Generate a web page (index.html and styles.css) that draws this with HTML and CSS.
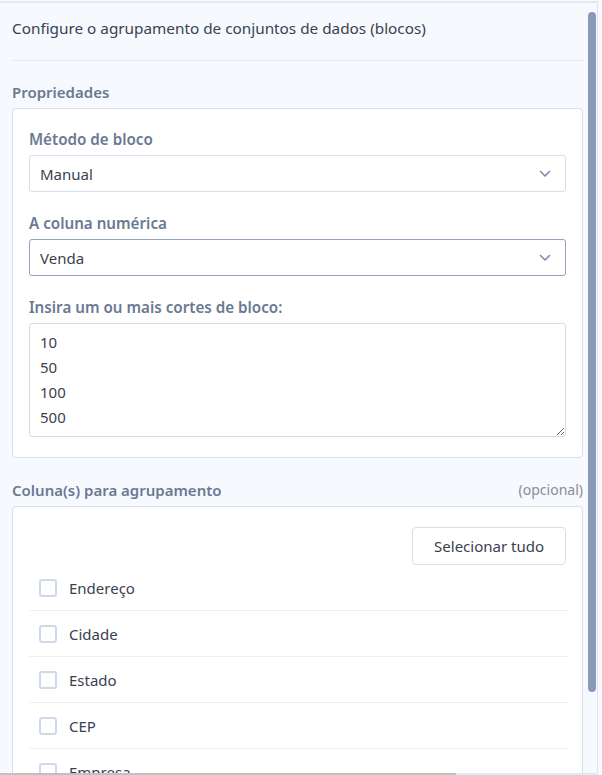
FILE: index.html
```html
<!DOCTYPE html>
<html lang="pt">
<head>
  <meta charset="UTF-8">
  <meta name="viewport" content="width=device-width, initial-scale=1.0">
  <title>Agrupamento em blocos</title>
  <link rel="stylesheet" href="styles.css">
</head>
<body>
  <div class="frame">
    <div class="pane">
      <div class="scroll">
        <div class="intro">Configure o agrupamento de conjuntos de dados (blocos)</div>

        <div class="section-title">Propriedades</div>
        <div class="card">
          <label class="field-label">Método de bloco</label>
          <div class="select">
            <span>Manual</span>
            <svg width="12" height="8" viewBox="0 0 12 8"><path d="M1.5 1.5 L6 6 L10.5 1.5" fill="none" stroke="#7d8cab" stroke-width="1.6" stroke-linecap="round" stroke-linejoin="round"/></svg>
          </div>

          <label class="field-label">A coluna numérica</label>
          <div class="select active">
            <span>Venda</span>
            <svg width="12" height="8" viewBox="0 0 12 8"><path d="M1.5 1.5 L6 6 L10.5 1.5" fill="none" stroke="#7d8cab" stroke-width="1.6" stroke-linecap="round" stroke-linejoin="round"/></svg>
          </div>

          <label class="field-label" for="cuts">Insira um ou mais cortes de bloco:</label>
          <textarea id="cuts" class="cuts">10
50
100
500</textarea>
        </div>

        <div class="section-head">
          <span class="section-title">Coluna(s) para agrupamento</span>
          <span class="optional">(opcional)</span>
        </div>
        <div class="card list-card">
          <div class="actions">
            <button type="button">Selecionar tudo</button>
          </div>
          <ul class="checklist">
            <li><span class="box"></span>Endereço</li>
            <li><span class="box"></span>Cidade</li>
            <li><span class="box"></span>Estado</li>
            <li><span class="box"></span>CEP</li>
            <li><span class="box"></span>Empresa</li>
            <li><span class="box"></span>Telefone</li>
          </ul>
        </div>
      </div>
      <div class="scrollbar"><div class="thumb"></div></div>
    </div>
    <div class="bottom-bar">
      <div class="bar-gray"></div>
      <div class="bar-cyan"></div>
    </div>
  </div>
</body>
</html>
```

FILE: styles.css
```css
body {
  margin: 0;
  font-family: "Noto Sans", "Open Sans", sans-serif;
  font-size: 15px;
  color: #3b4150;
  background: #f6f9fe;
}
.frame {
  height: 775px;
  display: flex;
  flex-direction: column;
  overflow: hidden;
}
.pane {
  width: 598px;
  height: 772px;
  margin-top: 1px;
  display: flex;
  border-top: 2px solid #e3e8f1;
  box-sizing: border-box;
}
.scroll {
  flex: 1;
  overflow: hidden;
  padding: 15px 3px 0 12px;
}
.scrollbar {
  width: 11px;
  border-right: 1px solid #dfe5ef;
}
.thumb {
  width: 8px;
  height: 680px;
  margin: 9px 1px 0 2px;
  background: #8a9bba;
  border-radius: 4px;
}
.intro {
  font-size: 15.3px;
  line-height: 20px;
  padding-bottom: 22px;
  border-bottom: 1px solid #e6ebf3;
}
.section-title {
  font-weight: 600;
  font-size: 15px;
  color: #6b7992;
  line-height: 20px;
}
.intro + .section-title {
  display: block;
  margin: 21px 0 6px;
}
.section-head {
  display: flex;
  justify-content: space-between;
  align-items: center;
  margin: 22px 0 6px;
  line-height: 20px;
}
.optional {
  font-size: 14px;
  color: #8a8d94;
}
.card {
  background: #fff;
  border: 1px solid #d6deee;
  border-radius: 4px;
  padding: 20px 16px;
}
.field-label {
  display: block;
  font-weight: 600;
  font-size: 15.2px;
  color: #6b7992;
  line-height: 20px;
  margin-bottom: 6px;
}
.select {
  height: 37px;
  box-sizing: border-box;
  display: flex;
  justify-content: space-between;
  align-items: center;
  padding: 0 14px 0 10px;
  border: 1px solid #d6deef;
  border-radius: 3px;
  margin-bottom: 21px;
}
.select.active {
  border-color: #93a2bd;
}
.cuts {
  display: block;
  width: 100%;
  height: 114px;
  box-sizing: border-box;
  padding: 6px 10px;
  border: 1px solid #d3dcef;
  border-radius: 3px;
  font-family: inherit;
  font-size: 15px;
  line-height: 25px;
  color: #3b4150;
  outline: none;
}
.list-card {
  padding-bottom: 0;
}
.actions {
  display: flex;
  justify-content: flex-end;
}
button {
  height: 38px;
  padding: 0 21px;
  background: #fff;
  border: 1px solid #d6deee;
  border-radius: 4px;
  font-family: inherit;
  font-size: 15px;
  color: #3b4150;
}
.checklist {
  list-style: none;
  margin: 0 -3px 0 0;
  padding: 0;
}
.checklist li {
  height: 45px;
  display: flex;
  align-items: center;
  gap: 12px;
  padding-left: 10px;
  border-bottom: 1px solid #edf0f6;
}
.box {
  width: 18px;
  height: 18px;
  box-sizing: border-box;
  border: 2px solid #d0d9ea;
  border-radius: 3px;
}
.bottom-bar {
  height: 2px;
  display: flex;
}
.bar-gray {
  width: 456px;
  background: #bfc1c3;
}
.bar-cyan {
  width: 142px;
  background: #d6eef5;
}
```
